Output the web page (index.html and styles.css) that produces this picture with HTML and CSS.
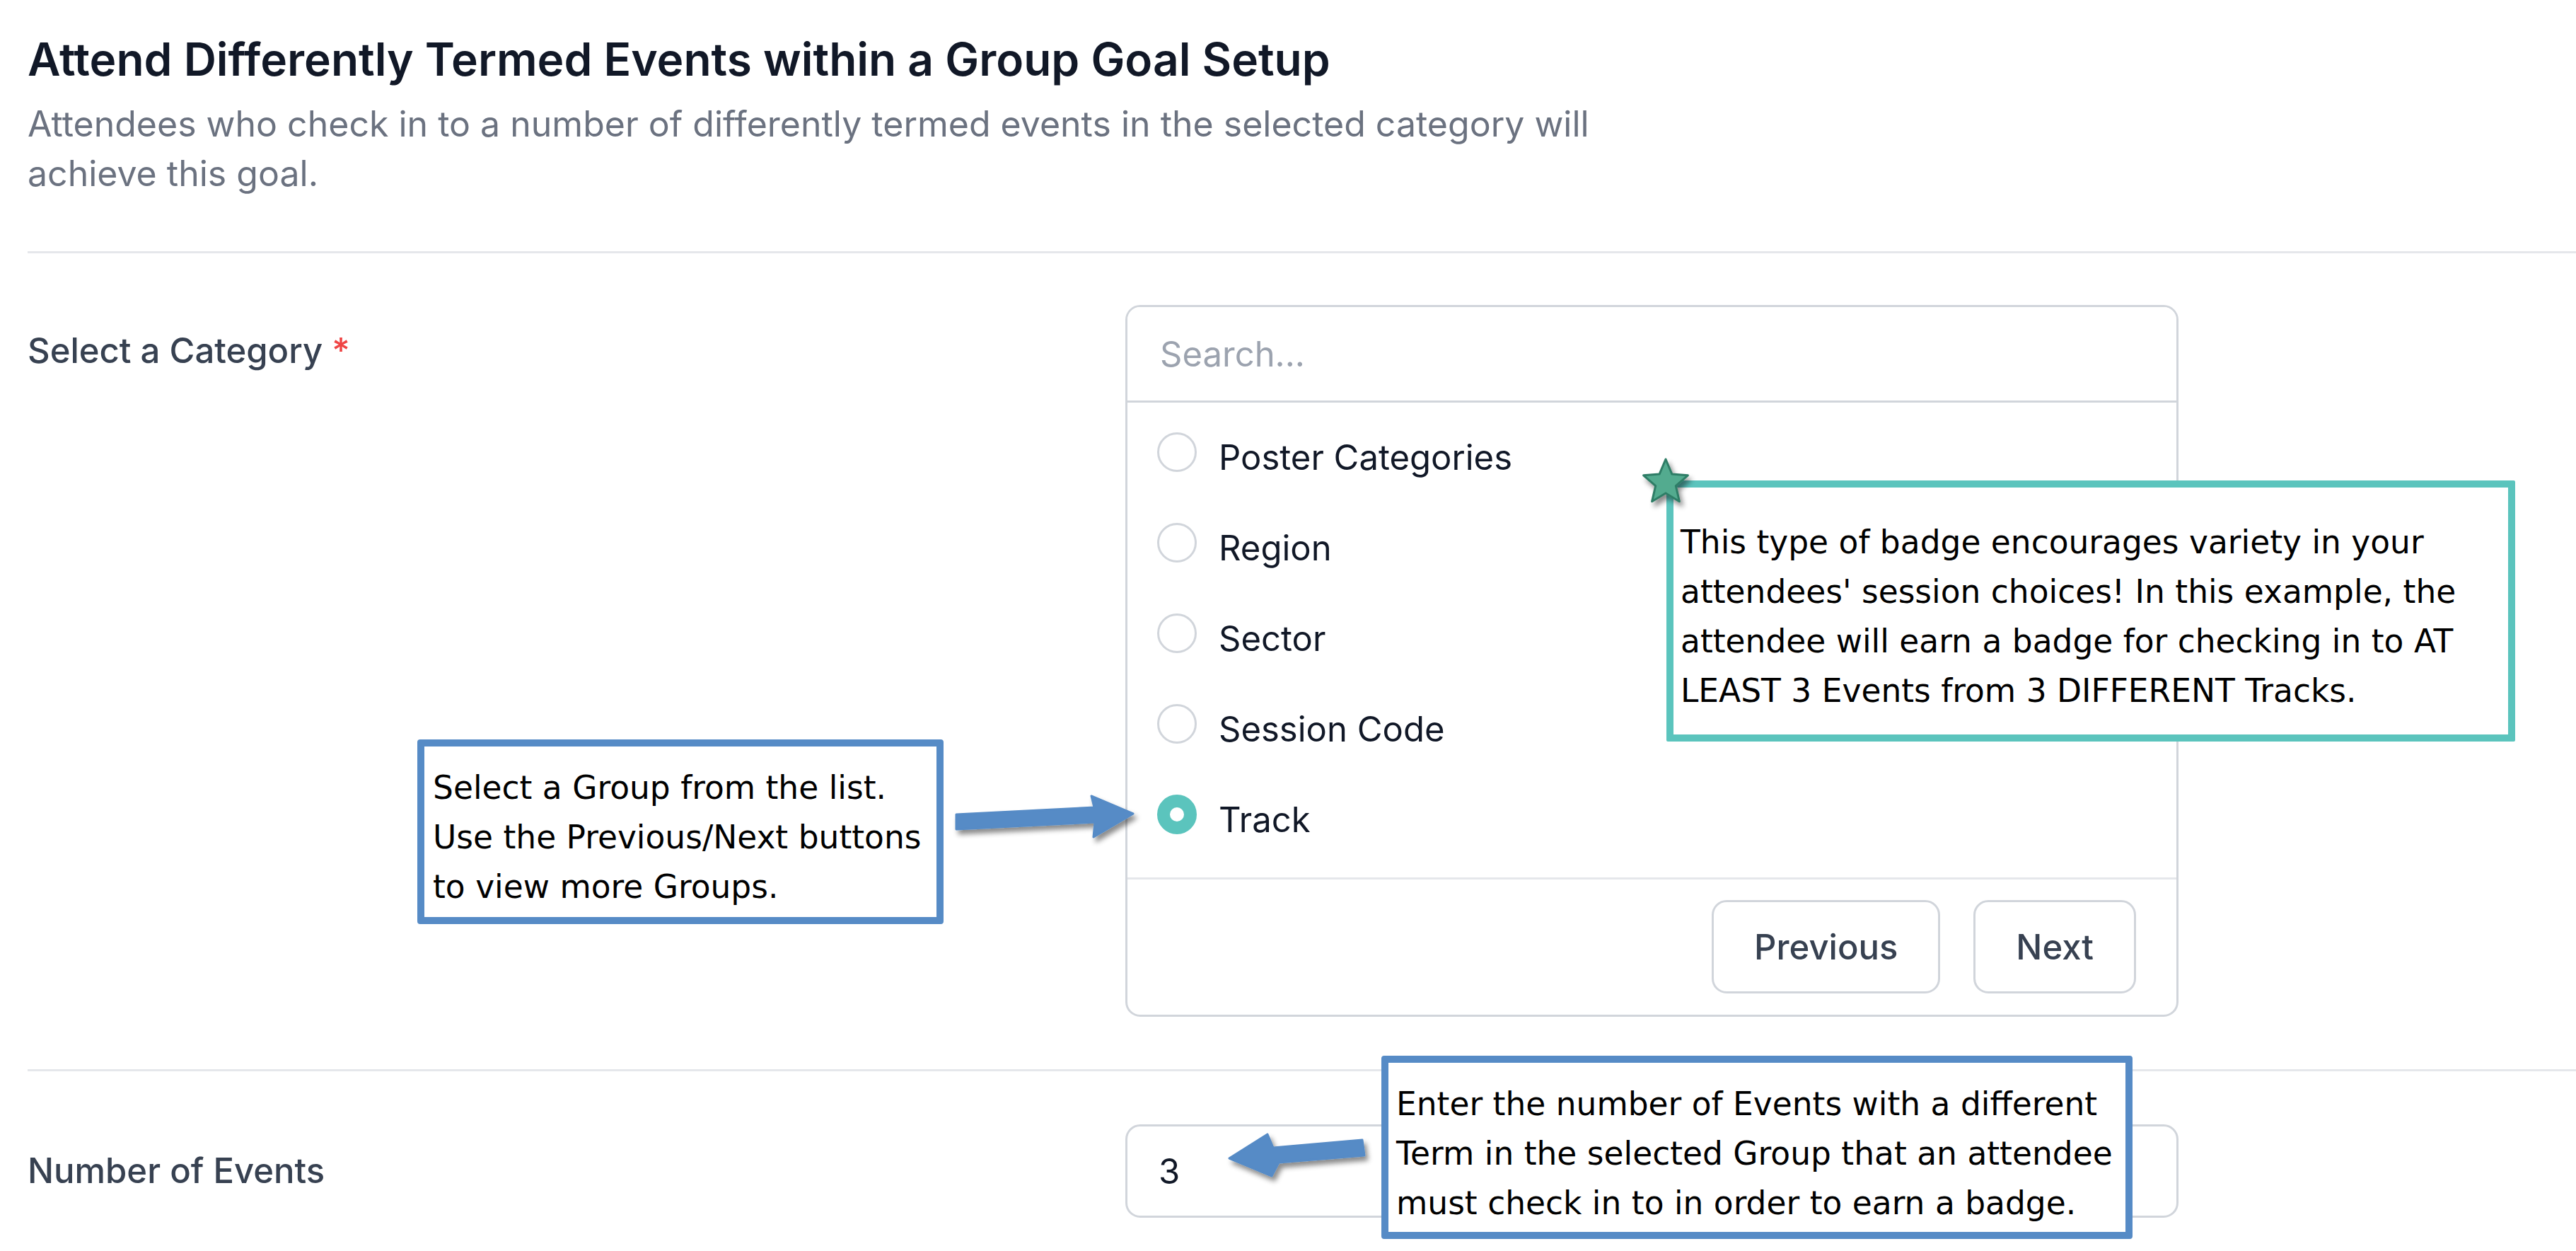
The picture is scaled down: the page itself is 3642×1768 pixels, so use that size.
FILE: index.html
```html
<!DOCTYPE html>
<html lang="en">
<head>
  <meta charset="UTF-8" />
  <meta name="viewport" content="width=device-width, initial-scale=1.0" />
  <title>Goal Setup</title>
  <link rel="stylesheet" href="styles.css">
</head>
<body>
  <div class="page">

    <header class="head">
      <h1>Attend Differently Termed Events within a Group Goal Setup</h1>
      <p>Attendees who check in to a number of differently termed events in the selected category will achieve this goal.</p>
    </header>

    <div class="row row-category">
      <label class="row-label">Select a Category <span class="req">*</span></label>
      <div class="picker">
        <input class="search" type="text" placeholder="Search..." />
        <div class="options">
          <div class="option"><span class="radio"></span><span class="option-text">Poster Categories</span></div>
          <div class="option"><span class="radio"></span><span class="option-text">Region</span></div>
          <div class="option"><span class="radio"></span><span class="option-text">Sector</span></div>
          <div class="option"><span class="radio"></span><span class="option-text">Session Code</span></div>
          <div class="option"><span class="radio checked"></span><span class="option-text">Track</span></div>
        </div>
        <div class="picker-foot">
          <button class="btn" type="button">Previous</button>
          <button class="btn" type="button">Next</button>
        </div>
      </div>
    </div>

    <div class="row row-number">
      <label class="row-label">Number of Events</label>
      <input class="num" type="text" value="3" />
    </div>

    <!-- help callouts drawn over the form -->
    <div class="note note-blue note-group">Select a Group from the list.<br>Use the Previous/Next buttons<br>to view more Groups.</div>
    <div class="note note-teal note-variety">This type of badge encourages variety in your<br>attendees' session choices! In this example, the<br>attendee will earn a badge for checking in to AT<br>LEAST 3 Events from 3 DIFFERENT Tracks.</div>
    <div class="note note-blue note-count">Enter the number of Events with a different<br>Term in the selected Group that an attendee<br>must check in to in order to earn a badge.</div>

    <svg class="marks" viewBox="0 0 3642 1768">
      <defs>
        <filter id="shadow" x="-20%" y="-40%" width="140%" height="180%">
          <feDropShadow dx="4" dy="6" stdDeviation="3.5" flood-color="#000" flood-opacity="0.45" />
        </filter>
      </defs>
      <polygon class="arrow" filter="url(#shadow)"
        points="1352,1151 1547,1141 1543,1125 1602,1150 1546,1183 1548,1162 1352,1172" />
      <polygon class="arrow" filter="url(#shadow)"
        points="1926,1611 1800,1622 1792,1603 1738,1637 1798,1662 1808,1643 1929,1633" />
      <polygon class="star" filter="url(#shadow)"
        points="2355,649 2363.8,669.9 2386.4,671.8 2369.3,686.6 2374.4,708.7 2355,697 2335.6,708.7 2340.7,686.6 2323.6,671.8 2346.2,669.9" />
    </svg>

  </div>
</body>
</html>
```

FILE: styles.css
```css
body {
  margin: 0;
  font-family: Inter, "Liberation Sans", sans-serif;
  background: #fff;
  overflow: hidden;
}
.page {
  position: relative;
  padding: 35px 0 0 39px;
  height: 1768px;
  box-sizing: border-box;
}
.head {
  padding-bottom: 75px;
}
.head h1 {
  margin: 0;
  font-size: 64px;
  line-height: 98px;
  font-weight: 600;
  color: #111827;
}
.head p {
  margin: 7px 0 0;
  max-width: 2352px;
  font-size: 50px;
  line-height: 70px;
  color: #6b7280;
}
.row {
  display: grid;
  grid-template-columns: 1552px 1489px;
  border-top: 3px solid #e5e7eb;
}
.row-category {
  padding: 73px 0 74px;
  align-items: start;
}
.row-number {
  padding-top: 75px;
  align-items: center;
}
.row-label {
  font-size: 49px;
  line-height: 70px;
  font-weight: 500;
  color: #374151;
}
.row-category .row-label {
  padding-top: 30px;
}
.req {
  color: #ef4444;
}
.picker {
  border: 3px solid #d1d5db;
  border-radius: 21px;
  overflow: hidden;
}
.search {
  display: block;
  width: 100%;
  height: 135px;
  box-sizing: border-box;
  border: 0;
  border-bottom: 3px solid #d1d5db;
  padding: 0 0 0 46px;
  font-family: inherit;
  font-size: 49px;
  color: #111827;
  outline: none;
}
.search::placeholder {
  color: #9ca3af;
}
.options {
  padding: 6px 0 25px 42px;
}
.option {
  display: flex;
  align-items: center;
  gap: 31px;
  height: 128px;
  font-size: 49px;
  color: #111827;
}
.option-text {
  padding-top: 15px;
}
.radio {
  display: grid;
  place-items: center;
  width: 56px;
  height: 56px;
  box-sizing: border-box;
  border: 3px solid #d1d5db;
  border-radius: 50%;
}
.radio.checked {
  background: #5bc4bd;
  border-color: #5bc4bd;
}
.radio.checked::after {
  content: "";
  width: 20px;
  height: 20px;
  border-radius: 50%;
  background: #fff;
}
.picker-foot {
  display: flex;
  justify-content: flex-end;
  gap: 47px;
  border-top: 3px solid #e5e7eb;
  padding: 29px 57px 30px 0;
}
.btn {
  height: 132px;
  padding: 0 57px;
  background: #fff;
  border: 3px solid #d1d5db;
  border-radius: 21px;
  font-family: inherit;
  font-size: 49px;
  font-weight: 500;
  color: #374151;
}
.num {
  display: block;
  width: 100%;
  height: 132px;
  box-sizing: border-box;
  border: 3px solid #d1d5db;
  border-radius: 21px;
  padding: 0 0 0 44px;
  font-family: inherit;
  font-size: 49px;
  color: #111827;
  outline: none;
}
.note {
  position: absolute;
  box-sizing: border-box;
  background: #fff;
  font-family: "DejaVu Sans", Verdana, sans-serif;
  font-size: 45.5px;
  line-height: 70px;
  color: #000;
  white-space: nowrap;
  border-radius: 4px;
}
.note-blue {
  border: 10px solid #568bc6;
}
.note-teal {
  border: 10px solid #5bc4bd;
  border-radius: 2px;
}
.note-group {
  left: 590px;
  top: 1045px;
  width: 744px;
  height: 261px;
  padding: 24px 0 0 12px;
}
.note-variety {
  left: 2356px;
  top: 679px;
  width: 1200px;
  height: 369px;
  padding: 43px 0 0 10px;
}
.note-count {
  left: 1953px;
  top: 1492px;
  width: 1062px;
  height: 259px;
  padding: 24px 0 0 11px;
}
.marks {
  position: absolute;
  left: 0;
  top: 0;
  width: 3642px;
  height: 1768px;
  pointer-events: none;
}
.arrow {
  fill: #568bc6;
  stroke: #568bc6;
  stroke-width: 3;
  stroke-linejoin: round;
}
.star {
  fill: #52ab8f;
  stroke: #2f7d66;
  stroke-width: 3;
  stroke-linejoin: round;
}
```
